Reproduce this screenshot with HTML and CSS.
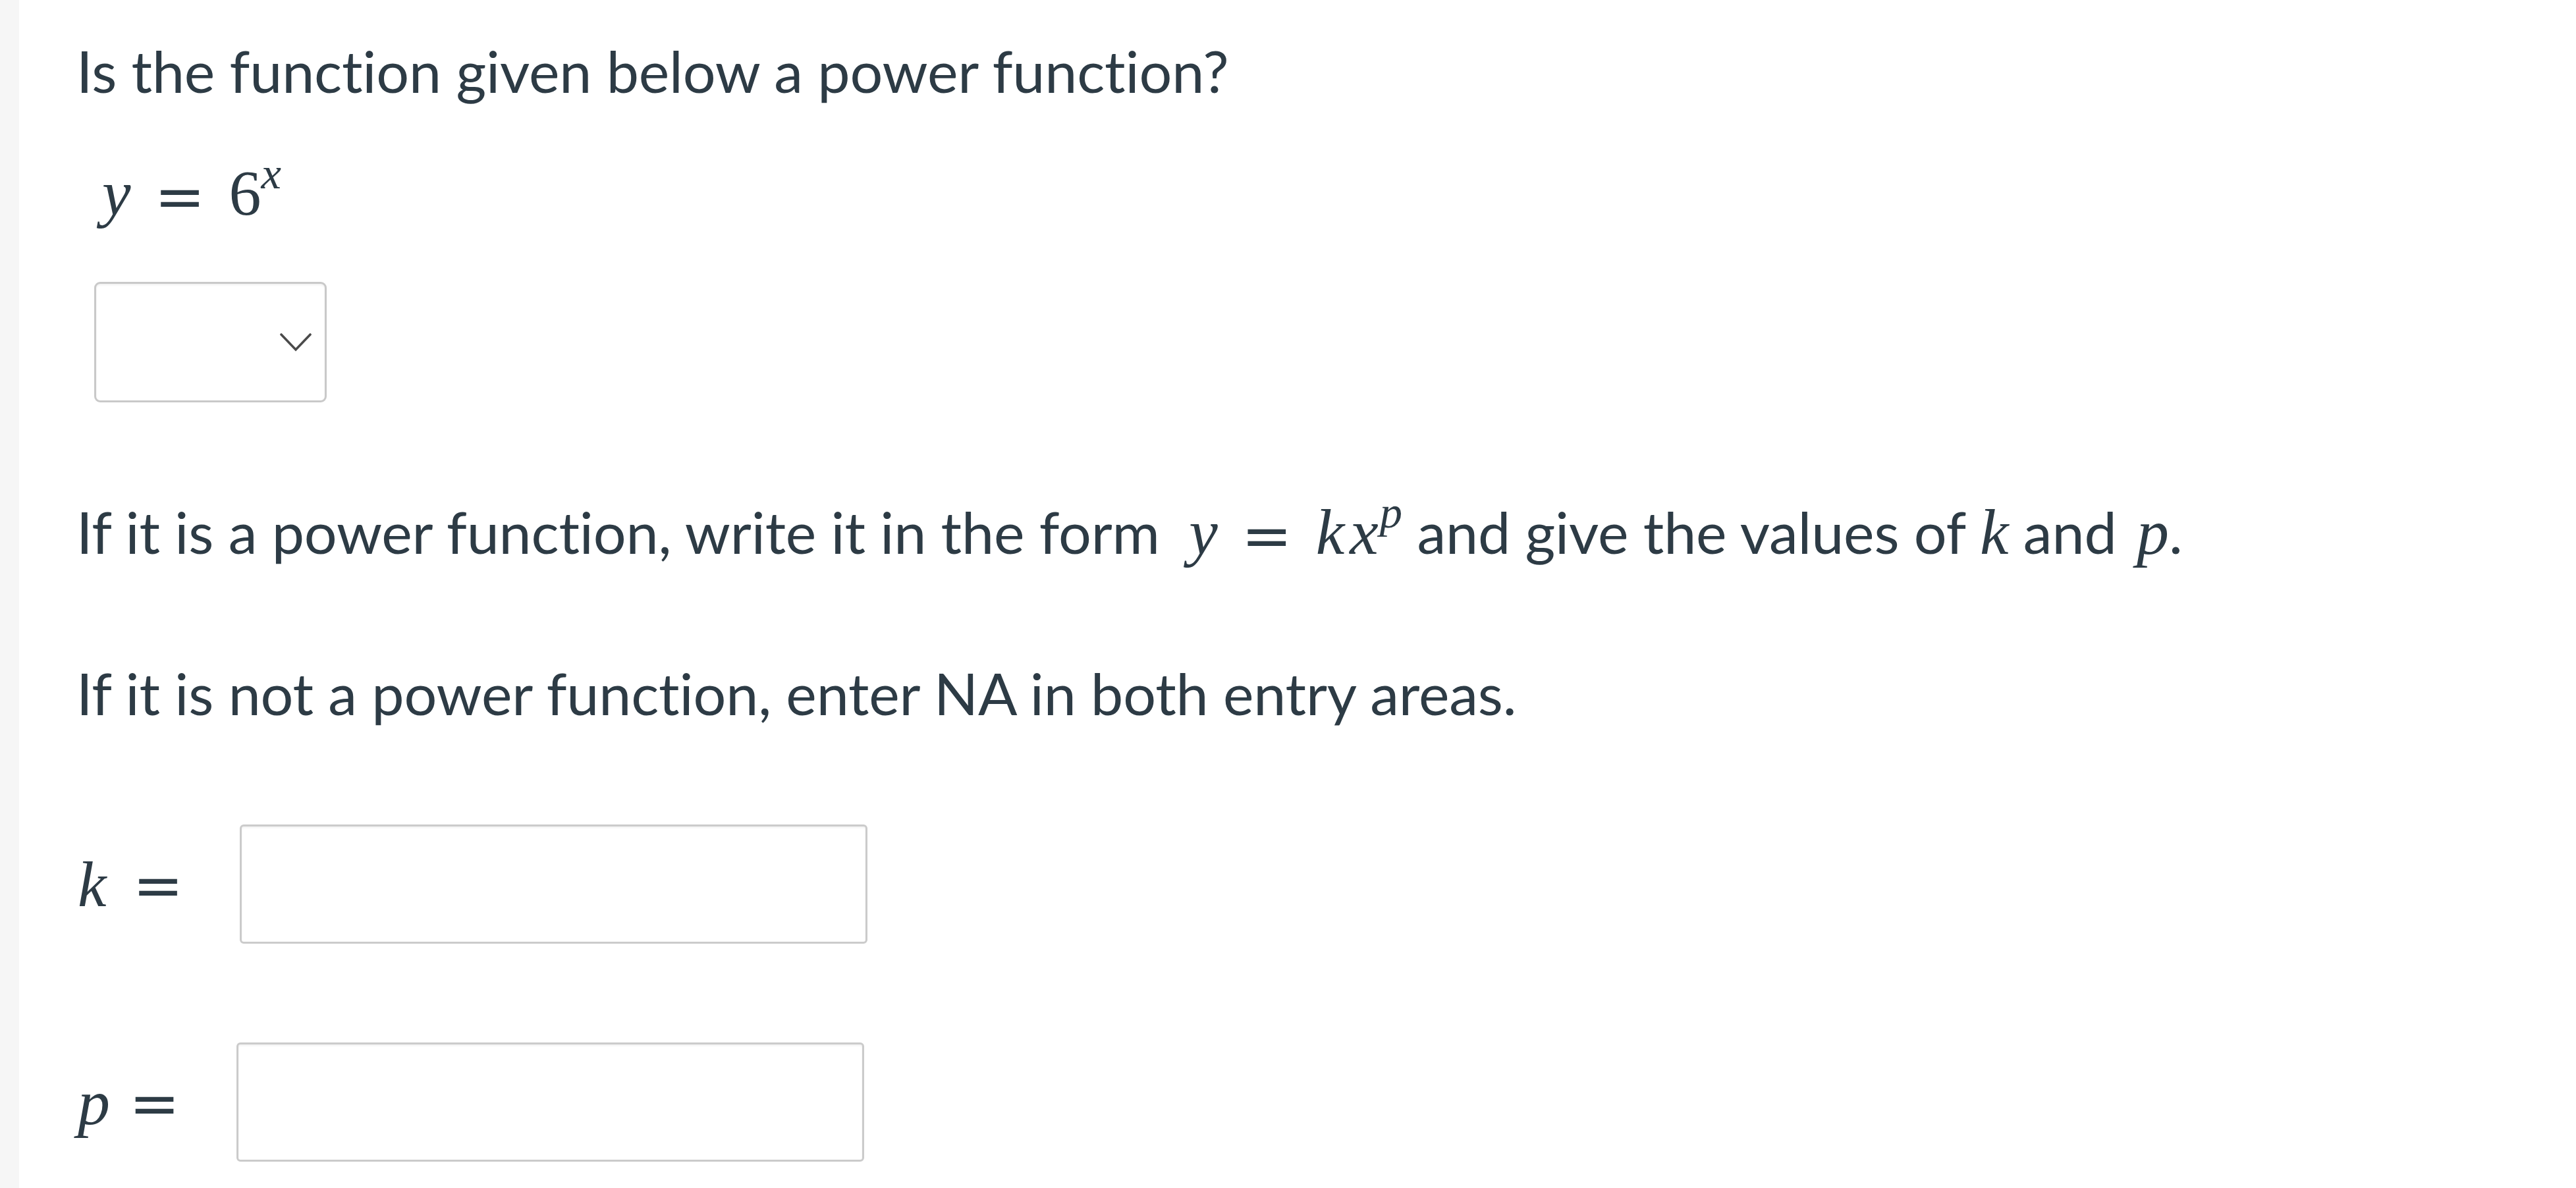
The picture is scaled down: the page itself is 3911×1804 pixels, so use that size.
FILE: index.html
```html
<!DOCTYPE html>
<html lang="en">
<head>
<meta charset="utf-8">
<title>Power function question</title>
<link rel="stylesheet" href="styles.css">
</head>
<body>
<div class="page">
  <aside class="gutter"></aside>
  <main class="content">
    <p class="text heading">Is the function given below a power function?</p>
    <div class="eq-line"><span class="math"><span class="mi">y</span><span class="mo">=</span><span class="mn">6</span><span class="mi sup">x</span></span></div>
    <div class="select" role="combobox" aria-label="Select answer">
      <svg class="chevron" width="48" height="28" viewBox="0 0 48 28" aria-hidden="true"><path d="M2 2 L24 25 L46 2" fill="none" stroke="#4a4a4a" stroke-width="3.6" stroke-linecap="round" stroke-linejoin="miter"/></svg>
    </div>
    <p class="text para-form">If it is a power function, write it in the form <span class="math inline-eq"><span class="mi">y</span><span class="mo">=</span><span class="mi">k</span><span class="mi">x</span><span class="mi sup">p</span></span> and give the values of <span class="math mi">k</span> and <span class="math mi">p</span>.</p>
    <p class="text para-na">If it is not a power function, enter NA in both entry areas.</p>
    <div class="answer-row row-k">
      <span class="math label"><span class="mi">k</span><span class="mo">=</span></span>
      <input class="answer" type="text" aria-label="k">
    </div>
    <div class="answer-row row-p">
      <span class="math label"><span class="mi">p</span><span class="mo">=</span></span>
      <input class="answer" type="text" aria-label="p">
    </div>
  </main>
</div>
</body>
</html>
```

FILE: styles.css
```css
html, body {
  margin: 0;
  padding: 0;
  background: #ffffff;
}

.page {
  display: flex;
  min-height: 1804px;
}

.gutter {
  width: 29px;
  flex: 0 0 29px;
  background: #f6f6f6;
}

.content {
  flex: 1;
  padding-left: 87px;
  color: #2d3b45;
  font-family: Lato, "Open Sans", sans-serif;
  font-size: 88px;
  letter-spacing: -0.15px;
  line-height: 135px;
}

.text {
  margin: 0;
}

.heading {
  margin-top: 40px;
}

.math {
  font-family: "Liberation Serif", "Times New Roman", serif;
  font-size: 98px;
  line-height: 1;
  letter-spacing: 0;
}

.mi {
  font-style: italic;
}

.mi + .mi {
  margin-left: 8px;
}

.mo {
  display: inline-block;
  font-family: "DejaVu Serif", serif;
  font-style: normal;
  font-size: 92px;
  vertical-align: -4px;
  margin: 0 36px;
}

.mn {
  font-style: normal;
}

.sup {
  font-size: 70%;
  vertical-align: 40px;
}

.mi + .sup {
  margin-left: 2px;
}

.eq-line {
  margin-top: 50px;
  padding-left: 39px;
}

.select {
  margin-top: 68px;
  margin-left: 27px;
  box-sizing: border-box;
  width: 353px;
  height: 183px;
  border: 3px solid #c9c9c9;
  border-radius: 9px;
  box-shadow: inset 0 2px 3px rgba(0, 0, 0, 0.06);
  display: flex;
  align-items: center;
  justify-content: flex-end;
  padding-right: 20px;
  background: #fff;
}

.chevron {
  display: block;
}

.para-form {
  margin-top: 129px;
}

.inline-eq {
  margin-left: 22px;
}

.para-na {
  margin-top: 110px;
}

.answer-row {
  display: flex;
  align-items: center;
  padding-left: 2px;
}

.row-k {
  margin-top: 132px;
}

.row-p {
  margin-top: 150px;
}

.label {
  display: inline-flex;
  align-items: baseline;
}

.row-k .label .mo {
  margin: 0 0 0 40px;
}

.row-p .label .mo {
  margin: 0 0 0 29px;
}

.answer {
  box-sizing: border-box;
  width: 953px;
  height: 181px;
  border: 3px solid #cbcbcb;
  border-radius: 6px;
  box-shadow: inset 0 2px 3px rgba(0, 0, 0, 0.06);
  background: #fff;
  font: 88px Lato, sans-serif;
  padding: 0 20px;
  outline: none;
}

.row-k .answer {
  margin-left: 85px;
}

.row-p .answer {
  margin-left: 86px;
}
```
